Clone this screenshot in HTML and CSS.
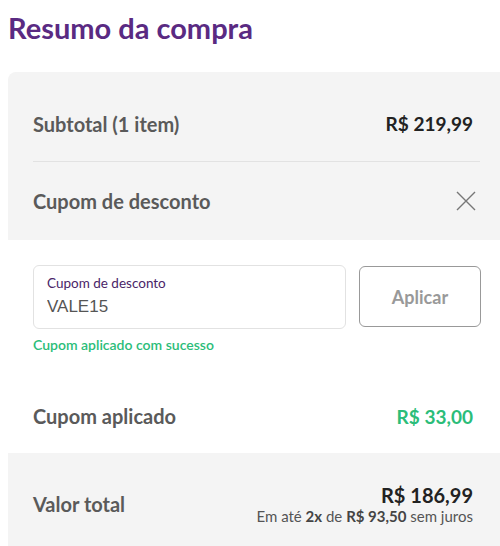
FILE: index.html
```html
<!DOCTYPE html>
<html lang="pt-BR">
<head>
    <meta charset="UTF-8">
    <meta name="viewport" content="width=device-width, initial-scale=1.0">
    <title>Resumo da compra</title>
    <link rel="stylesheet" href="styles.css">
</head>
<body>
    <h1 class="title">Resumo da compra</h1>
    <div class="summary">
        <div class="summary-top">
            <div class="row row-subtotal">
                <span class="label">Subtotal (1 item)</span>
                <span class="price">R$ 219,99</span>
            </div>
            <div class="row row-coupon">
                <span class="label">Cupom de desconto</span>
                <button class="close-btn" aria-label="Fechar">
                    <svg width="20" height="20" viewBox="0 0 20 20">
                        <path d="M1 1 L19 19 M19 1 L1 19" stroke="#777" stroke-width="1.4" fill="none"/>
                    </svg>
                </button>
            </div>
        </div>
        <div class="coupon-box">
            <div class="coupon-form">
                <div class="coupon-field">
                    <label for="coupon">Cupom de desconto</label>
                    <input type="text" id="coupon" value="VALE15">
                </div>
                <button class="apply-btn">Aplicar</button>
            </div>
            <div class="coupon-msg">Cupom aplicado com sucesso</div>
            <div class="row row-applied">
                <span class="label">Cupom aplicado</span>
                <span class="price green">R$ 33,00</span>
            </div>
        </div>
        <div class="summary-total">
            <div class="row row-total">
                <span class="label">Valor total</span>
                <div class="total-right">
                    <span class="price total">R$ 186,99</span>
                    <span class="installments">Em até <b>2x</b> de <b>R$ 93,50</b> sem juros</span>
                </div>
            </div>
        </div>
    </div>
</body>
</html>
```

FILE: styles.css
```css
body {
    font-family: 'Lato', 'Open Sans', sans-serif;
    margin: 0;
    padding: 0 0 0 8px;
    background: white;
    color: #555;
}

.title {
    margin: 0;
    padding-top: 10px;
    height: 72px;
    box-sizing: border-box;
    line-height: 36px;
    font-size: 29px;
    font-weight: 700;
    color: #5a2a82;
}

.summary {
    border-radius: 8px 0 0 0;
    overflow: hidden;
    width: 510px;
}

.summary-top {
    background: #f4f4f4;
    padding: 0 0 0 25px;
}

.row {
    display: flex;
    justify-content: space-between;
    align-items: center;
    width: 447px;
}

.label {
    font-size: 20px;
    font-weight: 700;
    color: #5a5a5a;
}

.price {
    font-size: 19px;
    font-weight: 700;
    color: #222;
    margin-right: 7px;
}

.price.green {
    color: #2bbd79;
}

.row-subtotal {
    height: 90px;
    padding-top: 14px;
    box-sizing: border-box;
    border-bottom: 1px solid #e2e2e2;
}

.row-coupon {
    height: 78px;
}

.close-btn {
    border: none;
    background: none;
    padding: 0;
    margin-right: 4px;
    display: flex;
    cursor: pointer;
}

.coupon-box {
    background: white;
    padding: 25px 0 0 25px;
}

.coupon-form {
    display: flex;
    gap: 13px;
    align-items: flex-start;
}

.coupon-field {
    width: 313px;
    height: 64px;
    box-sizing: border-box;
    border: 1px solid #e2e2e2;
    border-radius: 6px;
    padding: 9px 12px 0 13px;
}

.coupon-field label {
    display: block;
    font-size: 13.5px;
    color: #4a2568;
}

.coupon-field input {
    border: none;
    outline: none;
    padding: 0;
    margin-top: 6px;
    width: 100%;
    font-family: 'Liberation Sans', Arial, sans-serif;
    font-size: 17px;
    color: #555;
    background: none;
}

.apply-btn {
    margin-top: 1px;
    width: 122px;
    height: 61px;
    background: white;
    border: 1px solid #999;
    border-radius: 6px;
    font-family: inherit;
    font-size: 18px;
    font-weight: 700;
    color: #999;
    cursor: pointer;
}

.coupon-msg {
    margin-top: 7px;
    font-size: 14px;
    font-weight: 600;
    color: #2bbd79;
}

.row-applied {
    height: 100px;
    padding-top: 26px;
    box-sizing: border-box;
}

.summary-total {
    background: #f4f4f4;
    padding: 0 0 0 25px;
    height: 100px;
}

.row-total {
    padding-top: 30px;
}

.total-right {
    display: flex;
    flex-direction: column;
    align-items: flex-end;
}

.price.total {
    font-size: 20px;
    margin-right: 7px;
}

.installments {
    font-size: 15px;
    color: #555;
    margin-right: 7px;
}

.installments b {
    color: #444;
}
```
